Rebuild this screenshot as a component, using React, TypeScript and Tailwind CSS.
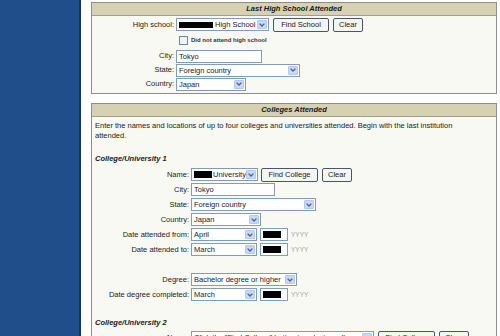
import type { ReactNode } from 'react';

// XP-looking dropdown box
function Select({ className, children }: { className: string; children?: ReactNode }) {
  return (
    <div className={`flex h-[13px] shrink-0 items-center border border-[#7f9db9] bg-white ${className}`}>
      <div className="flex min-w-0 flex-1 items-center gap-[1px] overflow-hidden whitespace-nowrap pl-[2px] leading-[11px]">
        {children}
      </div>
      <div className="mr-[1px] flex h-[9px] w-[10px] shrink-0 items-center justify-center rounded-[1px] border border-[#b6c8f2] bg-[#c8d8fb]">
        <svg width="6" height="4" viewBox="0 0 6 4">
          <path d="M0.6 0.6 L3 3 L5.4 0.6" fill="none" stroke="#4d6185" strokeWidth="1.3" />
        </svg>
      </div>
    </div>
  );
}

function Input({ className, children }: { className: string; children?: ReactNode }) {
  return (
    <div className={`flex h-[13px] shrink-0 items-center border border-[#7f9db9] bg-white pl-[2px] leading-[11px] ${className}`}>
      {children}
    </div>
  );
}

function Btn({ className, children }: { className: string; children: ReactNode }) {
  return (
    <div className={`flex h-[14px] shrink-0 items-center justify-center rounded-[2px] border border-[#44576e] bg-[#f5f5f1] leading-[12px] ${className}`}>
      {children}
    </div>
  );
}

function Redacted({ className }: { className: string }) {
  return <span className={`inline-block h-[6px] shrink-0 bg-black ${className}`} />;
}

function Row({ label, labelW, h, children }: { label: string; labelW: string; h: string; children: ReactNode }) {
  return (
    <div className={`flex items-center ${h}`}>
      <div className={`shrink-0 text-right whitespace-nowrap ${labelW}`}>{label}</div>
      <div className="flex items-center gap-[3px] pl-[2px]">{children}</div>
    </div>
  );
}

function DateRow({ label, month }: { label: string; month: string }) {
  return (
    <Row label={label} labelW="w-[97px]" h="h-[15px]">
      <Select className="w-[66px]">{month}</Select>
      <Input className="w-[28px]">
        <Redacted className="w-[18px] h-[7px]" />
      </Input>
      <span className="text-[6.5px] text-[#a3a3a3]">YYYY</span>
    </Row>
  );
}

function Panel({ title, children }: { title: string; children: ReactNode }) {
  return (
    <section className="border border-[#8d8d8d] bg-[#f8f9f3]">
      <h2 className="h-[13px] border-b border-[#a29e86] bg-[#d6d1b3] text-center font-bold italic leading-[12px]">{title}</h2>
      {children}
    </section>
  );
}

export default function App() {
  return (
    <div className="flex h-[336px] w-[500px] overflow-hidden bg-white font-['Liberation_Sans',Arial,sans-serif] text-[7.5px] text-[#1a1a1a]">
      <div className="w-[81px] shrink-0 border-r-2 border-[#143664] bg-[#1f4e8a]" />

      <main className="flex min-w-0 flex-1 flex-col gap-[9px] pl-[10px] pr-[3px] pt-[2px]">
        {/* Last high school */}
        <Panel title="Last High School Attended">
          <div className="pb-[2px] pt-[1px]">
            <Row label="High school:" labelW="w-[82px]" h="h-[15px]">
              <Select className="w-[93px]">
                <Redacted className="w-[34px]" />
                <span className="pl-[1px]">High School</span>
              </Select>
              <Btn className="ml-[1px] w-[56px]">Find School</Btn>
              <Btn className="ml-[1px] w-[30px]">Clear</Btn>
            </Row>
            <div className="flex h-[17px] items-center pl-[87px]">
              <span className="h-[9px] w-[9px] border border-[#6d86a3] bg-[#f2f2ee]" />
              <span className="pl-[3px] text-[6px] font-bold text-[#333]">Did not attend high school</span>
            </div>
            <Row label="City:" labelW="w-[82px]" h="h-[14px]">
              <Input className="w-[86px]">Tokyo</Input>
            </Row>
            <Row label="State:" labelW="w-[82px]" h="h-[14px]">
              <Select className="w-[124px]">Foreign country</Select>
            </Row>
            <Row label="Country:" labelW="w-[82px]" h="h-[14px]">
              <Select className="w-[70px]">Japan</Select>
            </Row>
          </div>
        </Panel>

        {/* Colleges */}
        <Panel title="Colleges Attended">
          <div className="pl-[3px] pr-[30px] pt-[4px]">
            <p className="leading-[10px]">
              Enter the names and locations of up to four colleges and universities attended. Begin with the last institution attended.
            </p>
            <h3 className="mt-[13px] font-bold italic leading-[10px]">College/University 1</h3>
          </div>
          <div className="pt-[3px]">
            <Row label="Name:" labelW="w-[97px]" h="h-[15px]">
              <Select className="w-[67px]">
                <Redacted className="w-[18px] h-[7px]" />
                <span>University</span>
              </Select>
              <Btn className="w-[57px]">Find College</Btn>
              <Btn className="ml-[1px] w-[30px]">Clear</Btn>
            </Row>
            <Row label="City:" labelW="w-[97px]" h="h-[15px]">
              <Input className="w-[84px]">Tokyo</Input>
            </Row>
            <Row label="State:" labelW="w-[97px]" h="h-[15px]">
              <Select className="w-[125px]">Foreign country</Select>
            </Row>
            <Row label="Country:" labelW="w-[97px]" h="h-[15px]">
              <Select className="w-[70px]">Japan</Select>
            </Row>
            <DateRow label="Date attended from:" month="April" />
            <DateRow label="Date attended to:" month="March" />

            <div className="mt-[15px]">
              <Row label="Degree:" labelW="w-[97px]" h="h-[15px]">
                <Select className="w-[106px]">Bachelor degree or higher</Select>
              </Row>
              <DateRow label="Date degree completed:" month="March" />
            </div>
          </div>
          <div className="px-[3px] pt-[16px]">
            <h3 className="font-bold italic leading-[10px]">College/University 2</h3>
          </div>
          <div className="pt-[2px]">
            <Row label="Name:" labelW="w-[97px]" h="h-[15px]">
              <Select className="w-[183px]">Click the "Find College" button to select a college</Select>
              <Btn className="ml-[1px] w-[57px]">Find College</Btn>
              <Btn className="ml-[1px] w-[30px]">Clear</Btn>
            </Row>
          </div>
        </Panel>
      </main>
    </div>
  );
}
